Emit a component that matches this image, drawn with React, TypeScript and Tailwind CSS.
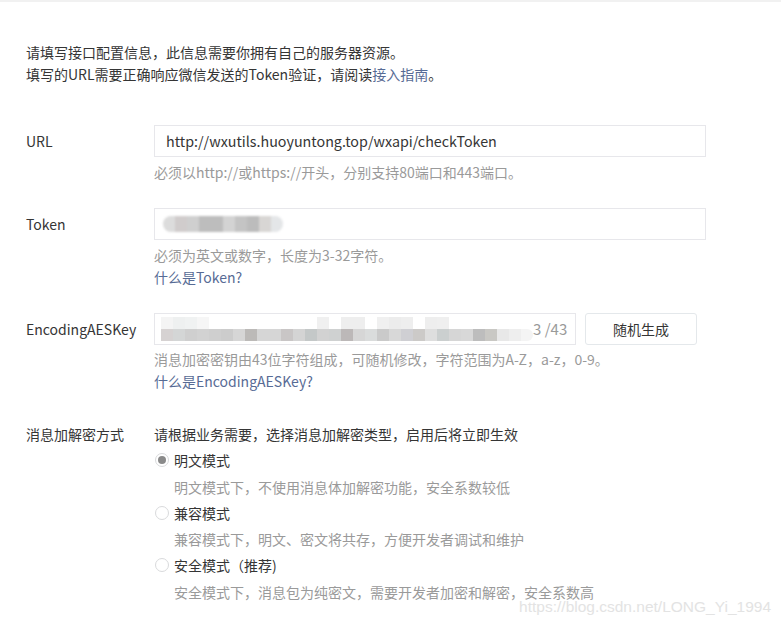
const font = { fontFamily: '"Noto Sans CJK SC", "Microsoft YaHei", sans-serif' }

const tokenBlocks = ['#dcdcdc', '#d0cccc', '#cfcfcf', '#bdbdbd', '#bdbdbd', '#d3d3d3', '#c4c4c4', '#bcbcbc', '#d8d6d4', '#e4e6e8']
const aesTop = ['#f4f4f4', '#eef0f0', '#f0f2f2', '#f6f6f6', '#ffffff', '#ffffff', '#ffffff', '#ffffff', '#ffffff', '#ffffff', '#ffffff', '#ffffff', '#ffffff', '#f0f0f0', '#ffffff', '#eeeeee', '#eeeeee', '#ffffff', '#f0f0f0', '#ececec', '#eeeeee', '#ffffff', '#eeeeee', '#efefef', '#ffffff', '#ffffff', '#ffffff', '#ffffff', '#ffffff', '#ffffff', '#ffffff']
const aesBottom = ['#d6d2d2', '#d4d6d6', '#cfcfcf', '#d2d2d2', '#cfcfcf', '#cccccc', '#d6d6d6', '#bcbab8', '#d6d6d6', '#d6d6d6', '#c9c6c6', '#d4d4d4', '#c4c8c8', '#d2d2d2', '#cfd1d1', '#bcb8b8', '#d6d6d6', '#dadcdc', '#cacaca', '#d8d8d8', '#cfcfd3', '#cccac8', '#dedede', '#cbcfcf', '#d6d6d6', '#d8d8d8', '#bdbdbd', '#c9c8c4', '#e8e8e8', '#eeeeee', '#f4f4f4']

function Radio({ checked, label, desc }: { checked?: boolean; label: string; desc: string }) {
  return (
    <div>
      <div className="flex items-center h-[26.5px]">
        <span className="w-[14px] h-[14px] rounded-full border border-[#d9dadc] flex items-center justify-center mr-[5px] ml-[1px]">
          {checked && <span className="w-[8px] h-[8px] rounded-full bg-[#8a8a8a]" />}
        </span>
        <span className="text-[#353535]">{label}</span>
      </div>
      <div className="pl-[20px] text-[#9a9a9a] h-[26px] leading-[26px]">{desc}</div>
    </div>
  )
}

export default function App() {
  return (
    <div className="relative w-[781px] h-[626px] bg-white overflow-hidden text-[14px] leading-[22px]" style={font}>
      <div className="h-[2px] bg-[#f1f1f1]" />

      <div className="pl-[26px] pt-[39px] text-[#353535]">
        <p>请填写接口配置信息，此信息需要你拥有自己的服务器资源。</p>
        <p>
          填写的URL需要正确响应微信发送的Token验证，请阅读<span className="text-[#576b95]">接入指南</span>。
        </p>
      </div>

      {/* URL */}
      <div className="flex pl-[26px] mt-[40px]">
        <div className="w-[128px] h-[32px] flex items-center text-[#353535]">URL</div>
        <div>
          <div className="w-[552px] h-[32px] border border-[#e7e7eb] flex items-center px-[11px] text-[14.3px] text-[#353535]">
            http://wxutils.huoyuntong.top/wxapi/checkToken
          </div>
          <div className="mt-[4px] text-[#9a9a9a]">必须以http://或https://开头，分别支持80端口和443端口。</div>
        </div>
      </div>

      {/* Token */}
      <div className="flex pl-[26px] mt-[25px]">
        <div className="w-[128px] h-[32px] flex items-center text-[#353535]">Token</div>
        <div>
          <div className="w-[552px] h-[32px] border border-[#e7e7eb] flex items-center px-[8px]">
            <div className="flex h-[16px] rounded-full overflow-hidden blur-[1px]">
              {tokenBlocks.map((c, i) => (
                <span key={i} className="w-[12px] h-full" style={{ background: c }} />
              ))}
            </div>
          </div>
          <div className="mt-[4px] text-[#9a9a9a]">必须为英文或数字，长度为3-32字符。</div>
          <div className="text-[#576b95]">什么是Token?</div>
        </div>
      </div>

      {/* EncodingAESKey */}
      <div className="flex pl-[26px] mt-[25px]">
        <div className="w-[128px] h-[32px] flex items-center text-[#353535]">EncodingAESKey</div>
        <div>
          <div className="flex gap-[9px]">
            <div className="w-[422px] h-[32px] border border-[#e7e7eb] flex items-center justify-between pl-[6px] pr-[10px]">
              <div className="flex flex-col blur-[0.6px]">
                <div className="flex h-[12px]">
                  {aesTop.map((c, i) => (
                    <span key={i} className="w-[12px] h-full" style={{ background: c }} />
                  ))}
                </div>
                <div className="flex h-[12px] rounded-r-full overflow-hidden">
                  {aesBottom.map((c, i) => (
                    <span key={i} className="w-[12px] h-full" style={{ background: c }} />
                  ))}
                </div>
              </div>
              <span className="shrink-0 whitespace-nowrap text-[#9a9a9a] text-[15px]">3 /43</span>
            </div>
            <div className="w-[112px] h-[32px] border border-[#e4e8eb] rounded-[3px] flex items-center justify-center text-[#353535]">
              随机生成
            </div>
          </div>
          <div className="mt-[3px] text-[#9a9a9a]">消息加密密钥由43位字符组成，可随机修改，字符范围为A-Z，a-z，0-9。</div>
          <div className="text-[#576b95]">什么是EncodingAESKey?</div>
        </div>
      </div>

      {/* 消息加解密方式 */}
      <div className="flex pl-[26px] mt-[29px] leading-[26px]">
        <div className="w-[128px] text-[#353535]">消息加解密方式</div>
        <div>
          <div className="text-[#353535] h-[26px]">请根据业务需要，选择消息加解密类型，启用后将立即生效</div>
          <Radio checked label="明文模式" desc="明文模式下，不使用消息体加解密功能，安全系数较低" />
          <Radio label="兼容模式" desc="兼容模式下，明文、密文将共存，方便开发者调试和维护" />
          <Radio label="安全模式（推荐)" desc="安全模式下，消息包为纯密文，需要开发者加密和解密，安全系数高" />
        </div>
      </div>

      <div
        className="absolute right-[10px] top-[596px] text-[15.5px] leading-[22px] text-[#e3e3e3] whitespace-nowrap"
        style={{ fontFamily: '"Liberation Sans", Arial, sans-serif' }}
      >
        https://blog.csdn.net/LONG_Yi_1994
      </div>
    </div>
  )
}
